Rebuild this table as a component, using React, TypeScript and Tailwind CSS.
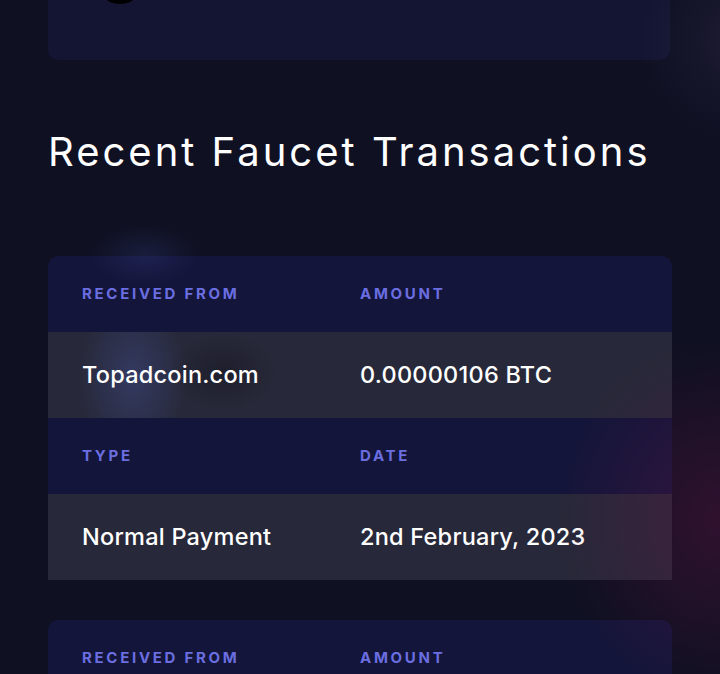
const transactions = [
  { from: "Topadcoin.com", amount: "0.00000106 BTC", type: "Normal Payment", date: "2nd February, 2023" },
  { from: "Topadcoin.com", amount: "0.00000106 BTC", type: "Normal Payment", date: "2nd February, 2023" },
];

function LabelRow({ a, b }: { a: string; b: string }) {
  return (
    <div className="grid h-[76px] grid-cols-[278px_1fr] items-center bg-[#14153a] px-[34px] text-[15px] font-bold uppercase tracking-[0.18em] text-[#6a6ee0]">
      <span>{a}</span>
      <span>{b}</span>
    </div>
  );
}

function ValueRow({ a, b, glow }: { a: string; b: string; glow?: boolean }) {
  return (
    <div className="relative grid h-[86px] grid-cols-[278px_1fr] items-center overflow-hidden bg-[#272839] px-[34px] text-[23.5px] font-medium tracking-[0.01em] text-white">
      {glow && (
        <>
          <div className="absolute left-[30px] top-[-40px] h-[170px] w-[110px] rounded-full bg-[radial-gradient(closest-side,rgba(80,100,190,0.3),transparent)]" />
          <div className="absolute left-[120px] top-[0px] h-[80px] w-[110px] rounded-full bg-[radial-gradient(closest-side,rgba(10,10,15,0.3),transparent)]" />
        </>
      )}
      <span className="relative">{a}</span>
      <span className="relative">{b}</span>
    </div>
  );
}

export default function App() {
  return (
    <div
      className="relative h-[674px] w-full overflow-hidden bg-[#0f1022]"
      style={{ fontFamily: "Inter, 'Noto Sans', sans-serif" }}
    >
      {/* page, scrolled */}
      <div className="-mt-[80px] flex flex-col px-[48px]">
        {/* balance card (mostly scrolled off) */}
        <div className="mr-[2px] h-[140px] rounded-b-[10px] bg-[#141533] px-[34px] pt-[36px]">
          <div className="flex items-center gap-[40px] pl-[14px]">
            <div className="h-12 w-12 rounded-full bg-black" />
            <span className="text-[22px] tracking-[0.12em] text-[#9a9cb0]">0.00001065</span>
          </div>
        </div>

        <h2 className="mt-[68px] text-[40px] font-normal leading-[48px] tracking-[0.075em] text-white">
          Recent Faucet Transactions
        </h2>

        <div className="mt-[80px] flex flex-col gap-[40px]">
          {transactions.map((t, i) => (
            <div key={i} className="overflow-hidden rounded-t-[10px]">
              <LabelRow a="Received From" b="Amount" />
              <ValueRow a={t.from} b={t.amount} glow={i === 0} />
              <LabelRow a="Type" b="Date" />
              <ValueRow a={t.type} b={t.date} />
            </div>
          ))}
        </div>
      </div>

      {/* glows */}
      <div className="pointer-events-none absolute left-[90px] top-[225px] h-[60px] w-[110px] rounded-full bg-[radial-gradient(closest-side,rgba(70,90,180,0.18),transparent)]" />
      <div className="pointer-events-none absolute left-[560px] top-[340px] h-[360px] w-[320px] bg-[radial-gradient(closest-side,rgba(110,20,70,0.35),transparent)]" />
      <div className="pointer-events-none absolute left-[640px] top-[-60px] h-[200px] w-[200px] bg-[radial-gradient(closest-side,rgba(60,55,90,0.3),transparent)]" />
    </div>
  );
}
